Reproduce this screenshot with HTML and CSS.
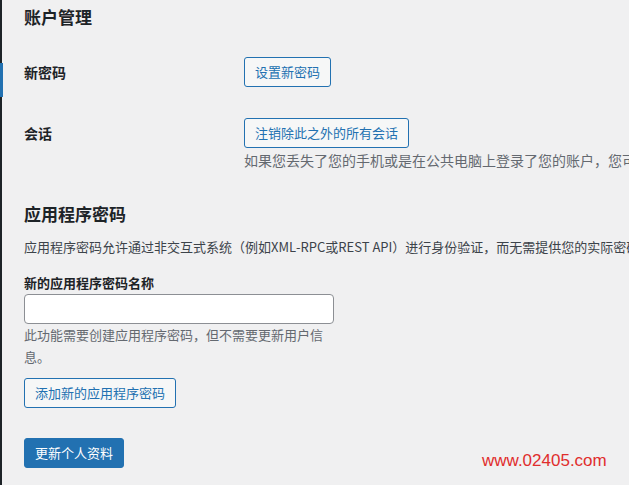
FILE: index.html
```html
<!DOCTYPE html>
<html lang="zh-CN">
  <head>
    <meta charset="UTF-8" />
    <meta name="viewport" content="width=device-width, initial-scale=1.0" />
    <title>个人资料</title>
    <link rel="stylesheet" href="styles.css">
  </head>
  <body>
    <div class="admin-menu">
      <span class="menu-current"></span>
    </div>

    <main class="wrap">
      <h2 class="section-title">账户管理</h2>

      <div class="form-row first">
        <div class="row-label">新密码</div>
        <div class="row-field">
          <button type="button" class="button">设置新密码</button>
        </div>
      </div>

      <div class="form-row">
        <div class="row-label">会话</div>
        <div class="row-field">
          <button type="button" class="button">注销除此之外的所有会话</button>
          <p class="description">如果您丢失了您的手机或是在公共电脑上登录了您的账户，您可以从其他地方登出，同时在这里保持登录。</p>
        </div>
      </div>

      <h2 class="section-title second">应用程序密码</h2>
      <p class="intro">应用程序密码允许通过非交互式系统（例如XML-RPC或REST API）进行身份验证，而无需提供您的实际密码。</p>

      <div class="app-pass">
        <label class="field-label" for="newAppPass">新的应用程序密码名称</label>
        <input type="text" id="newAppPass" class="text-input" />
        <p class="help">此功能需要创建应用程序密码，但不需要更新用户信息。</p>
        <button type="button" class="button">添加新的应用程序密码</button>
      </div>

      <div class="submit">
        <button type="button" class="button button-primary">更新个人资料</button>
      </div>
    </main>

    <div class="watermark">www.02405.com</div>
  </body>
</html>
```

FILE: styles.css
```css
html,
body {
  margin: 0;
  height: 100%;
  overflow: hidden;
}
body {
  background: #f0f0f1;
  color: #3c434a;
  font-family: "Noto Sans CJK SC", "Noto Sans", sans-serif;
  font-size: 13px;
  display: flex;
}

.admin-menu {
  width: 2px;
  flex-shrink: 0;
  background: #1d2327;
  padding-top: 63px;
}
.menu-current {
  display: block;
  width: 3px;
  height: 34px;
  background: #2271b1;
}

.wrap {
  padding: 5px 0 0 22px;
  white-space: nowrap;
}

.section-title {
  margin: 0;
  font-size: 17px;
  line-height: 24px;
  font-weight: 700;
  color: #1d2327;
}
.section-title.second {
  margin-top: 32px;
}

.form-row {
  display: grid;
  grid-template-columns: 220px auto;
  margin-top: 31px;
}
.form-row.first {
  margin-top: 28px;
}
.row-label {
  font-size: 14px;
  line-height: 30px;
  font-weight: 700;
  color: #1d2327;
}
.description {
  margin: 2px 0 0;
  font-size: 14px;
  line-height: 20px;
  color: #646970;
}

.button {
  display: inline-block;
  height: 30px;
  padding: 0 10px;
  font-family: inherit;
  font-size: 13px;
  line-height: 28px;
  color: #2271b1;
  background: #f6f7f7;
  border: 1px solid #2271b1;
  border-radius: 3px;
  cursor: pointer;
}
.button-primary {
  color: #fff;
  background: #2271b1;
}

.intro {
  margin: 11px 0 0;
  line-height: 20px;
  color: #3c434a;
}

.app-pass {
  margin-top: 16px;
  width: 310px;
  white-space: normal;
}
.field-label {
  display: block;
  font-size: 13px;
  line-height: 20px;
  font-weight: 700;
  color: #1d2327;
}
.text-input {
  display: block;
  box-sizing: border-box;
  width: 310px;
  height: 30px;
  margin-top: 1px;
  background: #fff;
  border: 1px solid #8c8f94;
  border-radius: 4px;
}
.help {
  margin: 0 0 10px;
  font-size: 13px;
  line-height: 22px;
  color: #646970;
}

.submit {
  margin-top: 30px;
}

.watermark {
  position: absolute;
  left: 482px;
  top: 451px;
  font-family: "Liberation Sans", sans-serif;
  font-size: 17px;
  color: #e02d2d;
}
```
